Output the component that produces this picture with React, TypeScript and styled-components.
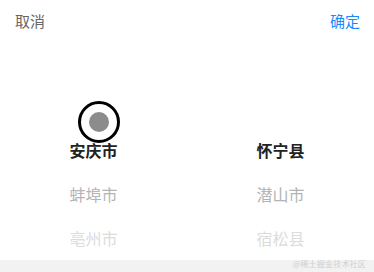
import styled, { createGlobalStyle } from "styled-components";

const Global = createGlobalStyle`
  html, body {
    margin: 0;
    padding: 0;
    background: #f2f2f2;
  }
  body {
    font-family: "Noto Sans CJK SC", "Noto Sans", sans-serif;
  }
`;

const Sheet = styled.div`
  position: relative;
  width: 374px;
  height: 272px;
  overflow: hidden;
  background: #f2f2f2;
`;

const Picker = styled.div`
  background: #fff;
`;

const Toolbar = styled.div`
  height: 40px;
  display: flex;
  align-items: center;
  justify-content: space-between;
  padding: 0 14px 0 15px;
`;

const ToolButton = styled.span<{ $primary?: boolean }>`
  font-size: 15px;
  line-height: 1;
  color: ${(p) => (p.$primary ? "#1989fa" : "#666")};
`;

const Columns = styled.div`
  display: grid;
  grid-template-columns: 1fr 1fr;
`;

const Column = styled.div`
  display: flex;
  flex-direction: column;
`;

const Option = styled.div<{ $level: number }>`
  height: 44px;
  display: flex;
  align-items: center;
  justify-content: center;
  font-size: 16px;
  font-weight: ${(p) => (p.$level === 0 ? 700 : 400)};
  color: ${(p) =>
    p.$level === 0 ? "#222" : p.$level === 1 ? "#b4b4b4" : "#dcdcdc"};
`;

const Touch = styled.div`
  position: absolute;
  left: 78px;
  top: 101px;
  width: 36px;
  height: 36px;
  border: 3px solid #000;
  border-radius: 50%;
  display: flex;
  align-items: center;
  justify-content: center;
`;

const TouchDot = styled.div`
  width: 20px;
  height: 20px;
  border-radius: 50%;
  background: #8c8c8c;
`;

const Watermark = styled.div`
  position: absolute;
  right: 8px;
  bottom: 3px;
  font-size: 8px;
  color: #cfcfcf;
  letter-spacing: 0.2px;
`;

const left = ["", "", "安庆市", "蚌埠市", "亳州市"];
const right = ["", "", "怀宁县", "潜山市", "宿松县"];

export default function App() {
  return (
    <>
      <Global />
      <Sheet>
        <Picker>
          <Toolbar>
            <ToolButton>取消</ToolButton>
            <ToolButton $primary>确定</ToolButton>
          </Toolbar>
          <Columns>
            {[left, right].map((col, ci) => (
              <Column key={ci}>
                {col.map((t, i) => (
                  <Option key={i} $level={Math.abs(i - 2)}>
                    {t}
                  </Option>
                ))}
              </Column>
            ))}
          </Columns>
        </Picker>
        <Touch>
          <TouchDot />
        </Touch>
        <Watermark>@稀土掘金技术社区</Watermark>
      </Sheet>
    </>
  );
}
